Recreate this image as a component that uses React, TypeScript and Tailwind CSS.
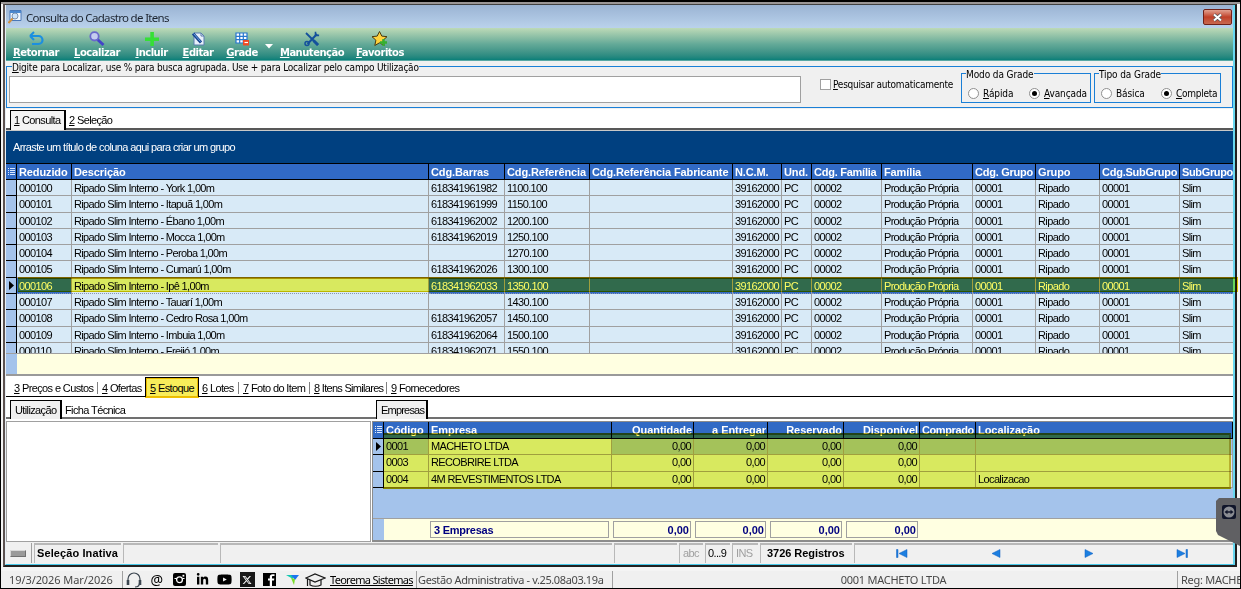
import type { ReactNode } from 'react';
import clsx from 'clsx';
import { FaLinkedinIn, FaXTwitter, FaYoutube } from 'react-icons/fa6';

const TAHOMA = "font-['DejaVu_Sans_Condensed','DejaVu_Sans',sans-serif] [font-stretch:condensed]";

const COLUMNS = [
  { title: 'Reduzido', width: 'w-[55px]' },
  { title: 'Descrição', width: 'w-[357px]' },
  { title: 'Cdg.Barras', width: 'w-[76px]' },
  { title: 'Cdg.Referência', width: 'w-[85px]' },
  { title: 'Cdg.Referência Fabricante', width: 'w-[143px]' },
  { title: 'N.C.M.', width: 'w-[49px]' },
  { title: 'Und.', width: 'w-[30px]' },
  { title: 'Cdg. Família', width: 'w-[70px]' },
  { title: 'Família', width: 'w-[91px]' },
  { title: 'Cdg. Grupo', width: 'w-[63px]' },
  { title: 'Grupo', width: 'w-[64px]' },
  { title: 'Cdg.SubGrupo', width: 'w-[80px]' },
  { title: 'SubGrupo', width: 'w-[53px]' },
];

const ITEMS = [
  ['000100', 'York', '618341961982', '1100.100'],
  ['000101', 'Itapuã', '618341961999', '1150.100'],
  ['000102', 'Ébano', '618341962002', '1200.100'],
  ['000103', 'Mocca', '618341962019', '1250.100'],
  ['000104', 'Peroba', '', '1270.100'],
  ['000105', 'Cumarú', '618341962026', '1300.100'],
  ['000106', 'Ipê', '618341962033', '1350.100'],
  ['000107', 'Tauarí', '', '1430.100'],
  ['000108', 'Cedro Rosa', '618341962057', '1450.100'],
  ['000109', 'Imbuia', '618341962064', '1500.100'],
  ['000110', 'Freijó', '618341962071', '1550.100'],
];

const SELECTED = '000106';

const STOCK_COLUMNS = [
  { title: 'Código', width: 'w-[45px]', right: false },
  { title: 'Empresa', width: 'w-[183px]', right: false },
  { title: 'Quantidade', width: 'w-[82px]', right: true },
  { title: 'a Entregar', width: 'w-[74px]', right: true },
  { title: 'Reservado', width: 'w-[76px]', right: true },
  { title: 'Disponível', width: 'w-[76px]', right: true },
  { title: 'Comprado', width: 'w-[56px]', right: false },
  { title: 'Localização', width: 'w-[257px]', right: false },
];

const STOCK = [
  ['0001', 'MACHETO LTDA', '0,00', '0,00', '0,00', '0,00', '', ''],
  ['0003', 'RECOBRIRE LTDA', '0,00', '0,00', '0,00', '0,00', '', ''],
  ['0004', '4M REVESTIMENTOS LTDA', '0,00', '0,00', '0,00', '0,00', '', 'Localizacao'],
];

// Underlines the keyboard shortcut letter, e.g. "&Editar"
function Accel({ text }: { text: string }) {
  const at = text.indexOf('&');
  return (
    <span className="whitespace-pre">
      {text.slice(0, at)}
      <span className="underline underline-offset-1">{text[at + 1]}</span>
      {text.slice(at + 2)}
    </span>
  );
}

function ToolButton({ label, className, children }: { label: string; className: string; children: ReactNode }) {
  return (
    <div className={clsx('flex shrink-0 flex-col items-center', className)}>
      <svg width="18" height="18" viewBox="0 -1 18 18" className="block">
        {children}
      </svg>
      <span className="font-['DejaVu_Sans',sans-serif] text-[10px] font-bold leading-[12px] tracking-[-0.5px] text-white">
        <Accel text={label} />
      </span>
    </div>
  );
}

function Toolbar() {
  return (
    <div className="flex h-[33px] shrink-0 items-start border-b border-[#58a8a4] bg-linear-to-b from-[#bddab7] via-[#64aa98] to-[#078079] pl-[7px] pt-px">
      <ToolButton label="&Retornar" className="w-[46px]">
        <path d="M4 6h7.500a3.800 3.800 0 0 1 0 8H5" fill="none" stroke="#1b8fe0" strokeWidth="2.200" />
        <path d="M3 6l4-4M3 6l4 4" fill="none" stroke="#1b8fe0" strokeWidth="2" />
      </ToolButton>
      <ToolButton label="&Localizar" className="ml-[15px] w-[46px]">
        <path d="M9.500 9.500l6 5.500" stroke="#4444c8" strokeWidth="3" />
        <circle cx="6.500" cy="6.300" r="4.200" fill="#c5cdf0" stroke="#6a68cc" strokeWidth="1.800" />
      </ToolButton>
      <ToolButton label="&Incluir" className="ml-[15px] w-[33px]">
        <path d="M7.300 2h3.600v5.500H16v3.600h-5.100v5H7.300v-5H2V7.500h5.300z" fill="#35e035" />
      </ToolButton>
      <ToolButton label="&Editar" className="ml-[15px] w-[30px]">
        <path d="M5 3h7l3 3v9H5z" fill="#e8f0fa" stroke="#5b7cae" />
        <path d="M12 3v3h3" fill="none" stroke="#5b7cae" />
        <path d="M4 3.500l8 9" stroke="#15438f" strokeWidth="3" />
        <path d="M4.500 3.500l7 8" stroke="#6ea6e8" />
      </ToolButton>
      <ToolButton label="&Grade" className="ml-[13px] w-[32px]">
        <path d="M3 3h11v10H3z" fill="#fff" />
        <path d="M3 3h11v10H3zM3 6.300h11M3 9.700h11M6.700 3v10M10.300 3v10" fill="none" stroke="#2676cf" strokeWidth="1.200" />
        <path d="M10 10h6v5.500h-6z" fill="#ef4a23" />
        <path d="M11.500 12.500h3.500" stroke="#fff" strokeWidth="1.200" />
      </ToolButton>
      <svg width="8" height="5" viewBox="0 0 8 5" className="ml-[7px] mt-[15px]">
        <path d="M0 0h8L4 4.500z" fill="#fff" />
      </svg>
      <ToolButton label="&Manutenção" className="ml-[7px] w-[64px]">
        <path d="M3 3l12 12" stroke="#14519c" strokeWidth="1.800" />
        <path d="M10.500 10.500l4.500 4.500" stroke="#14519c" strokeWidth="3" />
        <path d="M14 4L4.500 14" stroke="#14519c" strokeWidth="2" />
        <path d="M12.500 1.800v3.600h3.600" fill="none" stroke="#14519c" strokeWidth="1.600" />
        <circle cx="4" cy="13.500" r="2" fill="none" stroke="#14519c" strokeWidth="1.500" />
      </ToolButton>
      <ToolButton label="&Favoritos" className="ml-[12px] w-[48px]">
        <path
          d="M8.500 1.500l2.300 4.600 5.200.6-3.900 3.500 1.100 5.300-4.700-2.700-4.700 2.700L4.900 10.200 1 6.700l5.200-.6z"
          fill="#ffd23c"
          stroke="#4a3a10"
        />
        <path d="M12.500 9v7M9 12.500h7" stroke="#35b030" strokeWidth="2.400" />
      </ToolButton>
    </div>
  );
}

function Radio({ label, checked, className }: { label: string; checked?: boolean; className?: string }) {
  return (
    <span className={clsx('flex items-center gap-[4px]', className)}>
      <span className="flex size-[11px] items-center justify-center rounded-full border border-[#909090] bg-white">
        {checked && <span className="size-[5px] rounded-full bg-black" />}
      </span>
      {label.includes('&') ? <Accel text={label} /> : label}
    </span>
  );
}

function RadioGroup({ title, className, children }: { title: string; className: string; children: ReactNode }) {
  return (
    <div className={clsx('relative flex h-[30px] shrink-0 items-center border border-[#1a7fd6] pt-[11px]', className)}>
      <span className="absolute left-[4px] top-[-6px] bg-[#f0f0f0] leading-[13px]">{title}</span>
      {children}
    </div>
  );
}

function SearchBox() {
  return (
    <div className={clsx(TAHOMA, 'h-[48px] shrink-0 bg-[#f0f0f0] pt-[5px] text-[10px] leading-[13px] tracking-[-0.1px] text-black')}>
      <div className="relative flex h-[42px] border border-[#1a7fd6] pl-[2px]">
        <span className="absolute left-[5px] top-[-6px] whitespace-pre bg-[#f0f0f0] leading-[13px] tracking-[-0.2px]">
          <Accel text="&Digite para Localizar, use % para busca agrupada. Use + para Localizar pelo campo Utilização" />
        </span>
        <input className="mt-[9px] h-[27px] w-[792px] border border-[#a0a0a0] bg-white px-1 outline-none" />
        <span className="ml-[19px] flex h-[34px] w-[141px] shrink-0 items-center gap-[2px] tracking-[-0.24px]">
          <span className="size-[11px] border border-[#a0a0a0] bg-white" />
          <Accel text="&Pesquisar automaticamente" />
        </span>
        <RadioGroup title="Modo da Grade" className="mt-[6px] w-[130px] pl-[6px]">
          <Radio label="&Rápida" className="w-[61px]" />
          <Radio label="&Avançada" checked />
        </RadioGroup>
        <RadioGroup title="Tipo da Grade" className="ml-[3px] mt-[6px] w-[127px] pl-[6px]">
          <Radio label="Básica" className="w-[60px]" />
          <Radio label="&Completa" checked className="tracking-[-0.25px]" />
        </RadioGroup>
      </div>
    </div>
  );
}

function GridCorner() {
  return (
    <span className="flex w-[11px] shrink-0 items-center justify-center border-r border-black">
      <svg width="7" height="8" viewBox="0 0 7 8">
        <path d="M0 .5h1M2 .5h5M0 2.500h1M2 2.500h5M0 4.500h1M2 4.500h5M0 6.500h1M2 6.500h5" stroke="#dce8ff" />
      </svg>
    </span>
  );
}

function RowMarker({ active }: { active?: boolean }) {
  return (
    <span className="flex w-[11px] shrink-0 items-center justify-center border-b border-r border-black bg-[#a4c3eb]">
      {active && (
        <svg width="5" height="9" viewBox="0 0 5 9">
          <path d="M0 0l5 4.500L0 9z" fill="#000" />
        </svg>
      )}
    </span>
  );
}

function ItemsGrid() {
  return (
    <div className="h-[246px] shrink-0 border-b-2 border-[#9a9a9a] border-t-[1px] border-t-[#c8c8c8]">
      <div className="flex h-[32px] items-center bg-[#004080] pl-[7px] pt-px tracking-[-0.62px] text-white">
        Arraste um título de coluna aqui para criar um grupo
      </div>
      <div className="flex h-[17px] border-y border-black bg-[#316ac5] font-bold leading-[16px] tracking-[-0.12px] text-white">
        <GridCorner />
        {COLUMNS.map((col) => (
          <span
            key={col.title}
            className={clsx(
              'shrink-0 whitespace-nowrap border-r border-black pl-[2px] last:border-r-0 last:tracking-[-0.35px]',
              ['Cdg. Grupo', 'Cdg.SubGrupo', 'Cdg. Família'].includes(col.title) && 'tracking-[-0.25px]',
              col.width,
            )}
          >
            {col.title}
          </span>
        ))}
      </div>
      <div className="relative h-[173px]">
        <div className="h-[173px] overflow-hidden">
          {ITEMS.map(([code, name, barcode, reference]) => {
            const selected = code === SELECTED;
            const values = [
              code,
              `Ripado Slim Interno - ${name} 1,00m`,
              barcode,
              reference,
              '',
              '39162000',
              'PC',
              '00002',
              'Produção Própria',
              '00001',
              'Ripado',
              '00001',
              'Slim',
            ];
            return (
              <div key={code} className="flex h-[16.3px]">
                <RowMarker active={selected} />
                {values.map((value, i) => (
                  <span
                    key={i}
                    className={clsx(
                      'shrink-0 whitespace-nowrap border-b border-r border-[#a0a0a0] pl-[2px] leading-[16px] last:border-r-0',
                      i === 1 && 'tracking-[-0.66px]',
                      i === 8 && 'tracking-[-0.7px]',
                      selected && 'border-b-[#8a94b0] [border-bottom-style:dotted]',
                      selected && i !== 1 ? 'bg-[#316ac5] text-white' : 'bg-[#d8eaf7] text-black',
                      COLUMNS[i].width,
                    )}
                  >
                    {value}
                  </span>
                ))}
              </div>
            );
          })}
        </div>
        {/* highlighter stroke over the current record */}
        <div className="absolute left-[12px] top-[97px] h-[15px] w-[1220px] border-b border-r-2 border-t-2 border-b-[#e0c800] border-r-[#ecc800] border-t-[#c8a000] bg-[#fffe62] mix-blend-multiply" />
      </div>
      <div className="flex h-[21px] border-t border-[#a0a0a0] bg-[#ffffe1]">
        <span className="w-[11px] bg-[#a4c3eb]" />
      </div>
    </div>
  );
}

function DetailTabs() {
  const tab = 'mt-[3px] border-r border-[#808080] px-[4px] leading-[12px]';
  return (
    <div className="flex h-[21px] shrink-0 items-center border-b border-black bg-white pl-[4px]">
      <span className={clsx(tab, 'w-[88px]')}><Accel text="&3 Preços e Custos" /></span>
      <span className={clsx(tab, 'w-[47px] border-r-0')}><Accel text="&4 Ofertas" /></span>
      <span className="relative mt-px h-[20px] w-[54px] border border-b-0 border-black bg-[#f8f8f8] pl-[4px] leading-[21px]">
        <Accel text="&5 Estoque" />
        <span className="absolute -inset-px border-2 border-[#f0c000] bg-[#fff45c] mix-blend-multiply" />
      </span>
      <span className={clsx(tab, 'w-[40px] pl-[3px]')}><Accel text="&6 Lotes" /></span>
      <span className={clsx(tab, 'w-[71px]')}><Accel text="&7 Foto do Item" /></span>
      <span className={clsx(tab, 'w-[77px] tracking-[-0.7px]')}><Accel text="&8 Itens Similares" /></span>
      <span className={clsx(tab, 'border-r-0')}><Accel text="&9 Fornecedores" /></span>
    </div>
  );
}

function StockGrid() {
  return (
    <div className="relative flex h-[121px] w-[861px] flex-col border-b-2 border-l border-t border-[#8c8c8c] bg-[#a4c3eb]">
      <div className="flex h-[17px] shrink-0 border-b border-black bg-[#316ac5] font-bold leading-[17px] tracking-[-0.05px] text-white">
        <GridCorner />
        {STOCK_COLUMNS.map((col) => (
          <span
            key={col.title}
            className={clsx(
              'shrink-0 whitespace-nowrap border-r border-black pl-[2px]',
              col.right && 'pr-px text-right',
              col.title === 'Comprado' && 'tracking-[-0.4px]',
              col.width,
            )}
          >
            {col.title}
          </span>
        ))}
      </div>
      {STOCK.map((row, r) => (
        <div key={row[0]} className="flex h-[16.3px] shrink-0 text-black">
          <RowMarker active={r === 0} />
          {row.map((value, i) => (
            <span
              key={i}
              className={clsx(
                'shrink-0 whitespace-nowrap border-b border-r border-[#a0a0a0] px-[2px] leading-[15px]',
                r === 0 && i !== 1 ? 'bg-[#a4c3eb]' : 'bg-[#d8eaf7]',
                STOCK_COLUMNS[i].right && 'text-right',
                STOCK_COLUMNS[i].width,
              )}
            >
              {value}
            </span>
          ))}
        </div>
      ))}
      <div className="mt-auto flex h-[22px] shrink-0 border-t border-[#a0a0a0] bg-[#ffffe1] font-bold tracking-[0px] text-[#000080]">
        <span className="w-[11px] bg-[#a4c3eb]" />
        <div className="flex gap-[4px] py-[2px] pl-[46px] leading-[16px]">
          <span className="w-[179px] border border-[#a0a0a0] pl-[3px] tracking-[-0.25px]">3 Empresas</span>
          <span className="w-[78px] border border-[#a0a0a0] pr-px text-right">0,00</span>
          <span className="w-[71px] border border-[#a0a0a0] pr-px text-right">0,00</span>
          <span className="w-[72px] border border-[#a0a0a0] pr-px text-right">0,00</span>
          <span className="w-[72px] border border-[#a0a0a0] pr-px text-right">0,00</span>
        </div>
      </div>
      {/* highlighter box around the stock rows */}
      <div className="absolute left-[10px] top-[11px] h-[56px] w-[848px] border-2 border-l-0 border-b-[#c8b000] border-r-[#d8c030] border-t-[#b0a020] bg-[#fffe62] mix-blend-multiply" />
    </div>
  );
}

function StockArea() {
  return (
    <div className="shrink-0 bg-white">
      <div className="flex h-[22px] items-end border-b-2 border-[#707070] pl-[4px]">
        <span className="-mb-[2px] h-[19px] w-[52px] border border-b-0 border-r-2 border-black bg-[#f0f0f0] pl-[4px] leading-[19px]">Utilização</span>
        <span className="w-[314px] pl-[3px] leading-[14px]">Ficha Técnica</span>
        <span className="-mb-[2px] h-[19px] w-[52px] border border-b-0 border-r-2 border-black bg-[#f0f0f0] pl-[4px] leading-[19px] tracking-[-0.8px]">Empresas</span>
      </div>
      <div className="flex h-[123px] gap-px pt-[2px]">
        <div className="h-[121px] w-[365px] border border-[#a0a0a0] bg-white" />
        <StockGrid />
      </div>
    </div>
  );
}

function StatusCell({ className, children }: { className: string; children?: ReactNode }) {
  return (
    <span className={clsx('mr-[2px] flex h-[20px] shrink-0 items-center border-l border-t-2 border-[#b8b8b8] pb-[2px]', className)}>
      {children}
    </span>
  );
}

function NavIcon({ d, className }: { d: string; className: string }) {
  return (
    <svg width="12" height="9" viewBox="0 0 12 9" className={className}>
      <path d={d} fill="#1c7fe0" stroke="#0f5fc0" strokeWidth=".5" />
    </svg>
  );
}

function RecordBar() {
  return (
    <div className="flex h-[22px] shrink-0 items-start bg-[#f0f0f0] pt-px text-black">
      <span className="mr-[2px] flex h-[20px] w-[26px] shrink-0 items-center border-r border-[#a0a0a0] pl-[4px]">
        <span className="h-[7px] w-[16px] border border-[#707070] border-l-[#d8d8d8] border-t-[#d8d8d8] bg-[#9a9a9a]" />
      </span>
      <StatusCell className="w-[87px] pl-[2px] font-bold tracking-[0.1px]">Seleção Inativa</StatusCell>
      <StatusCell className="w-[95px]" />
      <StatusCell className="w-[392px]" />
      <StatusCell className="w-[63px]" />
      <StatusCell className="w-[24px] pl-[3px] text-[#a0a0a0]">abc</StatusCell>
      <StatusCell className="w-[25px] pl-[2px]">0...9</StatusCell>
      <StatusCell className="w-[26px] pl-[3px] text-[#a0a0a0]">INS</StatusCell>
      <StatusCell className="w-[92px] pl-[6px] font-bold tracking-[-0.05px]">3726 Registros</StatusCell>
      <span className="flex h-[20px] w-[379px] items-center border-l border-t-2 border-[#b8b8b8] pb-[2px]">
        <NavIcon className="ml-[41px]" d="M0.500 0.500h1.500v8h-1.500zM11 .5v8L3 4.500z" />
        <NavIcon className="ml-[82px]" d="M10 .5v8L2 4.500z" />
        <NavIcon className="ml-[81px]" d="M2 .5v8l8-4z" />
        <NavIcon className="ml-[81px]" d="M1 .5v8l8-4zM10 .5h1.500v8H10z" />
      </span>
    </div>
  );
}

function Footer() {
  const slot = 'flex w-[22.6px] shrink-0 justify-center';
  return (
    <div className="flex h-[17px] shrink-0 items-center bg-[#f0f0f0] pl-[8px] font-['Noto_Sans',sans-serif] text-[11px] leading-[17px] tracking-[-0.38px] text-[#484848]">
      <span className="w-[113px] shrink-0 tracking-[-0.08px]">19/3/2026 Mar/2026</span>
      <div className="flex h-[17px] w-[206px] shrink-0 items-center border-l border-[#a0a0a0] text-black">
        <span className={slot}>
          <svg width="16" height="16" viewBox="0 0 16 16" fill="none" stroke="#3c4650" strokeWidth="1.200">
            <path d="M2 9V7a6 6 0 0 1 12 0v2M13.500 11c0 2-1.500 4-4.500 4" />
            <path d="M2 8v5M14 8v5" strokeWidth="2.600" />
          </svg>
        </span>
        <span className={clsx(slot, 'text-[14px] tracking-normal')}>@</span>
        <span className={slot}>
          <svg width="13" height="13" viewBox="0 0 13 13">
            <rect width="13" height="13" rx="2" fill="#000" />
            <path d="M1.500 5.500h2.200M9.300 5.500h2.200" stroke="#fff" />
            <circle cx="6.500" cy="6.800" r="2.900" fill="none" stroke="#fff" strokeWidth="1.300" />
            <path d="M9.500 1.800h1.800v1.800H9.500z" fill="#fff" />
          </svg>
        </span>
        <span className={slot}><FaLinkedinIn size={13} /></span>
        <span className={slot}><FaYoutube size={15} /></span>
        <span className={slot}>
          <span className="flex size-[15px] items-center justify-center bg-[#181818]"><FaXTwitter size={10} color="#fff" /></span>
        </span>
        <span className={slot}>
          <svg width="13" height="13" viewBox="0 0 13 13">
            <path d="M0 0h13v13H0z" fill="#000" />
            <path d="M11.500 3H10C9.200 3 9 3.300 9 4v1.500h2.300l-.3 2H9V13H6.800V7.500H5v-2h1.800V3.800C6.800 2 7.800 1.200 9.600 1.200h1.900z" fill="#fff" />
          </svg>
        </span>
        <span className={slot}>
          <svg width="13" height="12" viewBox="0 0 13 12">
            <path d="M0 1h7v4z" fill="#12c8b0" />
            <path d="M5 1h8L9 6z" fill="#1a73f0" />
            <path d="M5 4l4 1-1 6z" fill="#7adc28" />
          </svg>
        </span>
        <span className={slot}>
          <svg width="21" height="16" viewBox="0 0 21 16" fill="none" stroke="#181818" strokeWidth="1.200">
            <path d="M1 6l9-4 10 4-10 4z" />
            <path d="M5 8v5c3 1.500 8 1.500 11 0V8M2.500 7v7" />
          </svg>
        </span>
      </div>
      <span className="w-[88px] shrink-0 whitespace-nowrap pl-[2px] tracking-[-0.7px] text-black underline">Teorema Sistemas</span>
      <span className="w-[196px] shrink-0 whitespace-nowrap border-l border-[#a0a0a0] pl-px">Gestão Administrativa - v.25.08a03.19a</span>
      <span className="w-[565px] shrink-0 border-l border-[#a0a0a0] pr-[3px] text-center tracking-[-0.25px]">0001 MACHETO LTDA</span>
      <span className="w-[62px] shrink-0 whitespace-nowrap border-l border-[#a0a0a0] pl-[3px] tracking-[-0.25px]">Reg: MACHE</span>
    </div>
  );
}

function RemoteHandle() {
  return (
    <svg width="24" height="48" viewBox="0 0 24 48" className="absolute left-[1215px] top-[496px]">
      <path d="M3 0h21v48L2 37l-2-4V3z" fill="#606063" />
      <rect x="6" y="7" width="14" height="14" rx="2" fill="#10152a" />
      <circle cx="13" cy="14" r="5.500" fill="#8a8c92" />
      <path d="M8.500 14l3-2.300v1.500h3v-1.500l3 2.300-3 2.300v-1.500h-3v1.500z" fill="#10152a" />
    </svg>
  );
}

export default function App() {
  return (
    <div className="relative flex h-[589px] w-[1241px] flex-col overflow-hidden border-x border-b border-t-2 border-black bg-[#f4f4f4] font-['Liberation_Sans',Arial,sans-serif] text-[11px] tracking-[-0.62px] text-black">
      <div className="flex h-[565px] shrink-0 border-t-2 border-[#9a9696] pl-[2px]">
        <div className="flex w-[1234px] flex-col border-b-2 border-l-2 border-r-2 border-t border-b-[#202020] border-l-[#5c5250] border-r-[#202020] border-t-[#404040]">
          <div className="flex flex-col border-b border-l border-r-2 border-b-[#48c8e8] border-l-[#e8eef4] border-r-[#68d8f0] bg-white">
            <div className="flex h-[23px] shrink-0 items-center bg-linear-to-b from-[#9ab3d3] to-[#bad2ec] pl-[2px] pr-px">
              <svg width="14" height="14" viewBox="0 0 14 14">
                <path d="M2 .5h11v10H2z" fill="#f4f8ff" stroke="#4a78b8" />
                <path d="M2 1h11v2H2z" fill="#4a88d0" />
                <path d="M5 8l-4.500 5" stroke="#d09040" strokeWidth="2" />
                <circle cx="7" cy="6" r="3" fill="#cfe4fa" stroke="#7890b0" />
              </svg>
              <span className="ml-[4px] mt-[2px] font-['Noto_Sans',sans-serif] text-[11.5px] tracking-[-0.68px] text-[#1c2430]">Consulta do Cadastro de Itens</span>
              <span className="ml-auto mt-px flex h-[16px] w-[29px] items-center justify-center rounded-[2px] border border-[#702018] bg-linear-to-b from-[#e0a090] via-[#c04028] to-[#c86850]">
                <svg width="11" height="9" viewBox="0 0 11 9">
                  <path d="M2 1.500l7 6M9 1.500l-7 6" stroke="#58585c" strokeWidth="3.600" />
                  <path d="M2 1.500l7 6M9 1.500l-7 6" stroke="#fff" strokeWidth="2" />
                </svg>
              </span>
            </div>
            <Toolbar />
            <SearchBox />
            <div className="flex h-[21px] shrink-0 items-end border-b-2 border-[#585858] bg-white pl-[4px]">
              <span className="-mb-[2px] h-[20px] w-[56px] border border-b-0 border-r-2 border-black bg-[#f4f4f4] pl-[3px] leading-[19px]"><Accel text="&1 Consulta" /></span>
              <span className="pl-[3px] leading-[16px]"><Accel text="&2 Seleção" /></span>
            </div>
            <ItemsGrid />
            <DetailTabs />
            <StockArea />
            <RecordBar />
          </div>
        </div>
      </div>
      <div className="h-[4px] shrink-0" />
      <Footer />
      <RemoteHandle />
    </div>
  );
}
